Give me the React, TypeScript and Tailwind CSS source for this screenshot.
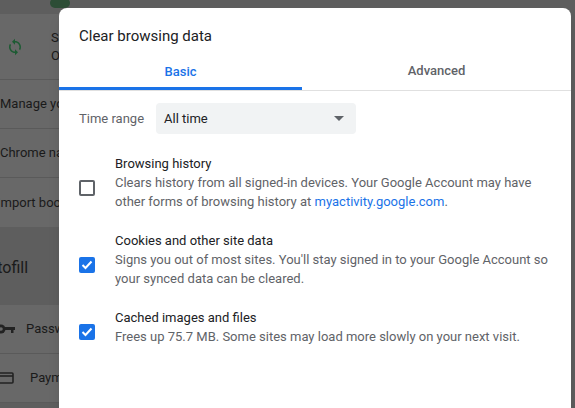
export default function App() {
  const link = "text-[#1a73e8]";
  return (
    <div className="relative w-[575px] h-[408px] overflow-hidden bg-[#5e5e5e] text-[13px]" style={{ fontFamily: "Roboto, 'Liberation Sans', sans-serif" }}>
      {/* background page */}
      <div className="absolute left-0 top-0 w-[200px] text-[#1a1a1a]">
        <div className="h-[14px] flex"><div className="ml-[50px] w-[20px] h-[10px] rounded-full bg-[#2d4d36] -mt-[2px]" /></div>
        <div className="bg-[#686868]">
          <div className="h-[66px] flex items-center border-b border-[#5a5a5a]">
            <svg className="ml-[6px]" width="18" height="18" viewBox="0 0 24 24" fill="#1d5b33"><path d="M12 4V1L8 5l4 4V6c3.3 0 6 2.7 6 6 0 1-.25 2-.7 2.8l1.46 1.46A7.9 7.9 0 0 0 20 12c0-4.4-3.6-8-8-8zm0 14c-3.3 0-6-2.7-6-6 0-1 .25-2 .7-2.8L5.24 7.74A7.9 7.9 0 0 0 4 12c0 4.4 3.6 8 8 8v3l4-4-4-4v3z"/></svg>
            <div className="ml-[27px] leading-[18px]"><div>S</div><div>O</div></div>
          </div>
          <div className="h-[49px] flex items-center border-b border-[#5a5a5a]">Manage your</div>
          <div className="h-[49px] flex items-center border-b border-[#5a5a5a]">Chrome name</div>
          <div className="h-[49px] flex items-center -ml-[3px]">Import bookmarks</div>
        </div>
        <div className="h-[78px] flex items-center text-[16px] -ml-[22px] pt-[4px]">Autofill</div>
        <div className="bg-[#686868]">
          <div className="h-[49px] flex items-center border-b border-[#5a5a5a]">
            <svg className="-ml-[4px] mr-[10px]" width="20" height="10" viewBox="0 0 20 10" fill="#222"><circle cx="5" cy="5" r="4.5"/><rect x="8" y="3" width="11" height="3"/><rect x="15" y="5" width="2.5" height="4"/><circle cx="5" cy="5" r="1.8" fill="#686868"/></svg>
            <span>Passwords</span>
          </div>
          <div className="h-[49px] flex items-center border-b border-[#5a5a5a]">
            <svg className="-ml-[2px] mr-[16px]" width="16" height="12" viewBox="0 0 16 12" fill="none" stroke="#222" strokeWidth="1.6"><rect x="1" y="1" width="14" height="10" rx="1"/><path d="M1 4h14"/></svg>
            <span>Payment</span>
          </div>
        </div>
      </div>
      {/* dialog */}
      <div className="absolute left-[59px] top-[8px] w-[512px] h-[420px] bg-white rounded-[8px] shadow-lg">
        <div className="pl-[20px] pt-[18px] text-[15px] text-[#202124] leading-[20px]">Clear browsing data</div>
        <div className="flex mt-[9px] border-b border-[#e0e0e0] h-[36px] text-[13px] font-medium">
          <div className="w-[243px] flex items-center justify-center text-[#1a73e8] border-b-[3px] border-[#1a73e8] pt-[2px]">Basic</div>
          <div className="flex-1 flex items-center justify-center text-[#5f6368] pb-[3px]">Advanced</div>
        </div>
        <div className="flex items-center mt-[12px] pl-[20px]">
          <span className="text-[#5f6368] w-[77px]">Time range</span>
          <div className="w-[200px] h-[31px] bg-[#f1f3f4] rounded-[4px] flex items-center justify-between px-[8px] text-[#202124]">
            <span>All time</span>
            <svg width="10" height="5" viewBox="0 0 10 5" className="mr-[4px]"><path d="M0 0h10L5 5z" fill="#5f6368"/></svg>
          </div>
        </div>
        {[
          { t: "Browsing history", c: false, d: <>Clears history from all signed-in devices. Your Google Account may have other forms of browsing history at <span className={link}>myactivity.google.com</span>.</> },
          { t: "Cookies and other site data", c: true, d: <>Signs you out of most sites. You'll stay signed in to your Google Account so your synced data can be cleared.</> },
          { t: "Cached images and files", c: true, d: <>Frees up 75.7 MB. Some sites may load more slowly on your next visit.</> },
        ].map((it, i) => (
          <div key={i} className={`flex items-center pl-[20px] pr-[20px] ${i === 0 ? "mt-[20px]" : "mt-[20px]"}`}>
            <div className="w-[36px] shrink-0 pt-[10px]">
              {it.c ? (
                <div className="w-[16px] h-[16px] rounded-[2px] bg-[#1a73e8] flex items-center justify-center">
                  <svg width="12" height="10" viewBox="0 0 12 10"><path d="M1.5 5l3 3 6-6.5" stroke="white" strokeWidth="2" fill="none"/></svg>
                </div>
              ) : (
                <div className="w-[16px] h-[16px] rounded-[2px] border-2 border-[#5f6368]" />
              )}
            </div>
            <div className="leading-[19px]">
              <div className="text-[#202124]">{it.t}</div>
              <div className="text-[#5f6368]">{it.d}</div>
            </div>
          </div>
        ))}
      </div>
    </div>
  );
}
